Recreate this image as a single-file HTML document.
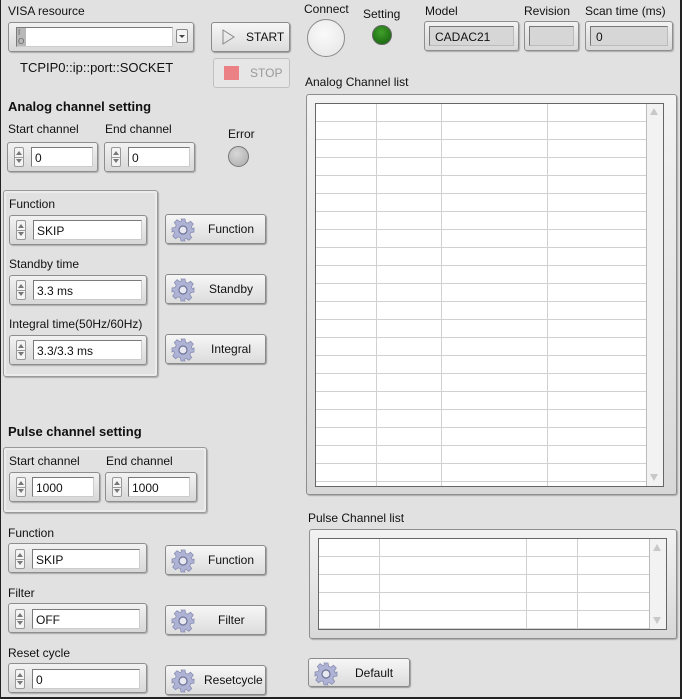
<!DOCTYPE html>
<html><head><meta charset="utf-8">
<style>
*{box-sizing:border-box;margin:0;padding:0}
body{width:682px;height:699px;background:#e1e1e1;font-family:"Liberation Sans",sans-serif;font-size:12px;color:#111;position:relative;overflow:hidden}
.a{position:absolute}
.lbl{position:absolute;font-size:12px;white-space:nowrap}
.b{position:absolute;font-size:13px;font-weight:bold;white-space:nowrap}
.frame{position:absolute;border:1px solid #8e8e8e;border-radius:3px;background:linear-gradient(#f2f2f2,#d8d8d8);box-shadow:1px 1px 1px #aaa}
.tb{position:absolute;background:#fff;border:1px solid #7a7a7a;border-right-color:#ccc;border-bottom-color:#ccc;font-size:12px;padding:3px 0 0 3px;white-space:nowrap}
.spin{position:absolute;width:10px;border:1px solid #999;border-radius:2px;background:#f4f4f4}
.spin:before,.spin:after{content:"";position:absolute;left:1px;border-left:3px solid transparent;border-right:3px solid transparent}
.spin:before{top:3px;border-bottom:4px solid #777}
.spin:after{bottom:3px;border-top:4px solid #777}
.spin i{position:absolute;left:0;right:0;top:50%;border-top:1px solid #999}
.btn{position:absolute;border:1px solid #8a8a8a;border-radius:3px;background:linear-gradient(#f6f6f6,#dcdcdc);box-shadow:1px 1px 1px #999;font-size:12px}
.btn span{position:absolute;top:7px;white-space:nowrap}
.btn svg{position:absolute;left:5px;top:3px}
.ind{position:absolute;background:#d6d6d6;border:1px solid #777;border-right-color:#bbb;border-bottom-color:#bbb;padding:6px 0 0 5px;font-size:12px}
.vl{position:absolute;width:1px;background:#d0d0d0}
</style></head><body>
<div class="a" style="left:0;top:0;width:1px;height:699px;background:#222"></div>
<div class="a" style="left:680px;top:0;width:2px;height:699px;background:#222"></div>
<div class="a" style="left:0;top:697px;width:682px;height:2px;background:#222"></div>

<svg width="0" height="0" style="position:absolute"><defs>
<symbol id="g" viewBox="0 0 24 24"><path d="M10 1h4l.6 3.2 2.2 1 2.7-1.9 2.8 2.8-1.9 2.7 1 2.2L23 10v4l-3.2.6-1 2.2 1.9 2.7-2.8 2.8-2.7-1.9-2.2 1L14 23h-4l-.6-3.2-2.2-1-2.7 1.9-2.8-2.8 1.9-2.7-1-2.2L1 14v-4l3.2-.6 1-2.2L3.3 4.5l2.8-2.8 2.7 1.9 2.2-1z" fill="#aeb2d4" stroke="#8a8fb2" stroke-width=".8"/><circle cx="12" cy="12" r="4" fill="#e8e8f0" stroke="#6f7598" stroke-width="1.2"/></symbol>
</defs></svg>

<div class="lbl" style="left:8px;top:4px">VISA resource</div>
<div class="frame" style="left:8px;top:22px;width:186px;height:30px"></div>
<div class="tb" style="left:16px;top:27px;width:157px;height:20px"></div>
<div class="a" style="left:17px;top:28px;width:9px;height:18px;background:#b8b8b8;font-size:8px;color:#666;line-height:9px;padding-left:1px">I<br>O</div>
<div class="a" style="left:176px;top:29px;width:12px;height:14px;border:1px solid #888;border-radius:2px;background:#f4f4f4"><div class="a" style="left:2px;top:5px;border-left:3px solid transparent;border-right:3px solid transparent;border-top:3px solid #444"></div></div>
<div class="lbl" style="left:20px;top:60px;font-size:13px">TCPIP0::ip::port::SOCKET</div>

<div class="btn" style="left:211px;top:22px;width:79px;height:30px"><svg width="14" height="16" style="left:10px;top:6px"><path d="M1 1L12 8L1 15Z" fill="none" stroke="#888" stroke-width="1"/></svg><span style="left:34px;font-size:12px">START</span></div>
<div class="btn" style="left:213px;top:58px;width:77px;height:30px;border-color:#c0c0c0;box-shadow:none;background:#e6e6e6"><div class="a" style="left:10px;top:7px;width:15px;height:14px;background:#eb8185"></div><span style="left:36px;color:#999">STOP</span></div>

<div class="b" style="left:8px;top:99px">Analog channel setting</div>
<div class="lbl" style="left:8px;top:122px">Start channel</div>
<div class="frame" style="left:7px;top:142px;width:91px;height:30px"></div>
<div class="spin" style="left:14px;top:147px;height:20px"><i></i></div>
<div class="tb" style="left:31px;top:147px;width:62px;height:20px">0</div>
<div class="lbl" style="left:105px;top:122px">End channel</div>
<div class="frame" style="left:104px;top:142px;width:91px;height:30px"></div>
<div class="spin" style="left:111px;top:147px;height:20px"><i></i></div>
<div class="tb" style="left:128px;top:147px;width:62px;height:20px">0</div>
<div class="lbl" style="left:228px;top:127px">Error</div>
<div class="a" style="left:228px;top:146px;width:21px;height:21px;border-radius:50%;background:radial-gradient(circle at 40% 35%,#d8d8d8,#a9a9a9);border:1px solid #777"></div>

<div class="a" style="left:3px;top:190px;width:155px;height:187px;border:1px solid #999;border-radius:3px;box-shadow:1px 1px 1px #aaa,inset 0 0 0 2px #ececec"></div>
<div class="lbl" style="left:9px;top:197px">Function</div>
<div class="frame" style="left:9px;top:215px;width:138px;height:30px"></div>
<div class="spin" style="left:16px;top:220px;height:20px"><i></i></div>
<div class="tb" style="left:33px;top:220px;width:109px;height:20px">SKIP</div>
<div class="btn" style="left:165px;top:214px;width:101px;height:30px"><svg width="24" height="24"><use href="#g"/></svg><span style="left:42px">Function</span></div>
<div class="lbl" style="left:9px;top:257px">Standby time</div>
<div class="frame" style="left:9px;top:275px;width:138px;height:30px"></div>
<div class="spin" style="left:16px;top:280px;height:20px"><i></i></div>
<div class="tb" style="left:33px;top:280px;width:109px;height:20px">3.3 ms</div>
<div class="btn" style="left:165px;top:274px;width:101px;height:30px"><svg width="24" height="24"><use href="#g"/></svg><span style="left:43px">Standby</span></div>
<div class="lbl" style="left:9px;top:317px">Integral time(50Hz/60Hz)</div>
<div class="frame" style="left:9px;top:335px;width:138px;height:30px"></div>
<div class="spin" style="left:16px;top:340px;height:20px"><i></i></div>
<div class="tb" style="left:33px;top:340px;width:109px;height:20px">3.3/3.3 ms</div>
<div class="btn" style="left:165px;top:334px;width:101px;height:30px"><svg width="24" height="24"><use href="#g"/></svg><span style="left:45px">Integral</span></div>

<div class="b" style="left:8px;top:424px">Pulse channel setting</div>
<div class="a" style="left:3px;top:447px;width:204px;height:66px;border:1px solid #999;border-radius:3px;box-shadow:1px 1px 1px #aaa,inset 0 0 0 2px #ececec"></div>
<div class="lbl" style="left:9px;top:454px">Start channel</div>
<div class="frame" style="left:9px;top:472px;width:91px;height:30px"></div>
<div class="spin" style="left:16px;top:477px;height:20px"><i></i></div>
<div class="tb" style="left:32px;top:477px;width:62px;height:20px">1000</div>
<div class="lbl" style="left:106px;top:454px">End channel</div>
<div class="frame" style="left:105px;top:472px;width:92px;height:30px"></div>
<div class="spin" style="left:112px;top:477px;height:20px"><i></i></div>
<div class="tb" style="left:128px;top:477px;width:62px;height:20px">1000</div>

<div class="lbl" style="left:8px;top:526px">Function</div>
<div class="frame" style="left:8px;top:543px;width:139px;height:30px"></div>
<div class="spin" style="left:15px;top:549px;height:20px"><i></i></div>
<div class="tb" style="left:32px;top:549px;width:108px;height:20px">SKIP</div>
<div class="btn" style="left:165px;top:545px;width:101px;height:30px"><svg width="24" height="24"><use href="#g"/></svg><span style="left:42px">Function</span></div>
<div class="lbl" style="left:8px;top:586px">Filter</div>
<div class="frame" style="left:8px;top:603px;width:139px;height:30px"></div>
<div class="spin" style="left:15px;top:609px;height:20px"><i></i></div>
<div class="tb" style="left:32px;top:609px;width:108px;height:20px">OFF</div>
<div class="btn" style="left:165px;top:605px;width:101px;height:30px"><svg width="24" height="24"><use href="#g"/></svg><span style="left:52px">Filter</span></div>
<div class="lbl" style="left:8px;top:646px">Reset cycle</div>
<div class="frame" style="left:8px;top:663px;width:139px;height:30px"></div>
<div class="spin" style="left:15px;top:669px;height:20px"><i></i></div>
<div class="tb" style="left:32px;top:669px;width:108px;height:20px">0</div>
<div class="btn" style="left:165px;top:665px;width:101px;height:30px"><svg width="24" height="24"><use href="#g"/></svg><span style="left:38px">Resetcycle</span></div>

<div class="lbl" style="left:304px;top:2px">Connect</div>
<div class="a" style="left:307px;top:19px;width:38px;height:38px;border-radius:50%;background:radial-gradient(circle at 45% 40%,#fafafa,#e4e4e4);border:1px solid #8a8a8a"></div>
<div class="lbl" style="left:363px;top:7px">Setting</div>
<div class="a" style="left:372px;top:25px;width:20px;height:20px;border-radius:50%;background:radial-gradient(circle at 45% 35%,#3fa02a,#125d0b);border:1px solid #666"></div>
<div class="lbl" style="left:425px;top:4px">Model</div>
<div class="frame" style="left:424px;top:21px;width:95px;height:30px"></div>
<div class="ind" style="left:429px;top:26px;width:85px;height:20px;padding-top:3px">CADAC21</div>
<div class="lbl" style="left:524px;top:4px">Revision</div>
<div class="frame" style="left:524px;top:21px;width:55px;height:30px"></div>
<div class="ind" style="left:529px;top:26px;width:45px;height:20px"></div>
<div class="lbl" style="left:585px;top:4px">Scan time (ms)</div>
<div class="frame" style="left:585px;top:21px;width:88px;height:30px"></div>
<div class="ind" style="left:590px;top:26px;width:78px;height:20px;padding-top:3px">0</div>

<div class="lbl" style="left:305px;top:75px">Analog Channel list</div>
<div class="frame" style="left:306px;top:94px;width:371px;height:401px"></div>
<div class="a" style="left:315px;top:103px;width:349px;height:384px;border:1px solid #666;background:#fff"></div>
<div class="a" style="left:316px;top:104px;width:330px;height:382px;background:repeating-linear-gradient(to bottom,#fff 0 17px,#d0d0d0 17px 18px)"></div>
<div class="vl" style="left:376px;top:104px;height:382px"></div>
<div class="vl" style="left:441px;top:104px;height:382px"></div>
<div class="vl" style="left:547px;top:104px;height:382px"></div>
<div class="a" style="left:646px;top:104px;width:17px;height:382px;background:#f2f2f2;border-left:1px solid #bbb"></div>
<div class="a" style="left:650px;top:108px;border-left:4px solid transparent;border-right:4px solid transparent;border-bottom:7px solid #c8c8c8"></div>
<div class="a" style="left:650px;top:474px;border-left:4px solid transparent;border-right:4px solid transparent;border-top:7px solid #c8c8c8"></div>

<div class="lbl" style="left:308px;top:511px">Pulse Channel list</div>
<div class="frame" style="left:309px;top:529px;width:368px;height:110px"></div>
<div class="a" style="left:318px;top:538px;width:349px;height:92px;border:1px solid #666;background:#fff"></div>
<div class="a" style="left:319px;top:539px;width:330px;height:90px;background:repeating-linear-gradient(to bottom,#fff 0 17px,#d0d0d0 17px 18px)"></div>
<div class="vl" style="left:379px;top:539px;height:90px"></div>
<div class="vl" style="left:526px;top:539px;height:90px"></div>
<div class="vl" style="left:577px;top:539px;height:90px"></div>
<div class="a" style="left:649px;top:539px;width:17px;height:90px;background:#f2f2f2;border-left:1px solid #bbb"></div>
<div class="a" style="left:653px;top:544px;border-left:4px solid transparent;border-right:4px solid transparent;border-bottom:7px solid #c8c8c8"></div>
<div class="a" style="left:653px;top:617px;border-left:4px solid transparent;border-right:4px solid transparent;border-top:7px solid #c8c8c8"></div>

<div class="btn" style="left:308px;top:658px;width:102px;height:29px"><svg width="24" height="24"><use href="#g"/></svg><span style="left:46px">Default</span></div>
</body></html>
